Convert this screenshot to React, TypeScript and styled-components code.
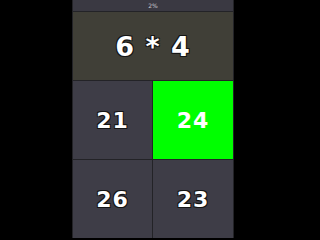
import React from 'react';
import styled, { createGlobalStyle } from 'styled-components';

const GlobalStyle = createGlobalStyle`
  html, body {
    margin: 0;
    padding: 0;
    background: #000;
    height: 100%;
    overflow: hidden;
  }
`;

const Frame = styled.div`
  margin-left: 72px;
  width: 162px;
  height: 238px;
  box-sizing: border-box;
  padding: 0 1px;
  background: #232327;
  display: flex;
  flex-direction: column;
  gap: 1px;
  font-family: "DejaVu Sans", sans-serif;
`;

const Progress = styled.div`
  height: 11px;
  flex: none;
  background: #3a3942;
  color: #c9c9cf;
  font-size: 6px;
  line-height: 11px;
  text-align: center;
`;

const Question = styled.div`
  height: 68px;
  flex: none;
  background: #403f37;
  color: #fff;
  font-size: 27px;
  font-weight: bold;
  letter-spacing: 1px;
  display: flex;
  align-items: center;
  justify-content: center;
  text-shadow: 1px 1px 0 #151515, -1px -1px 0 #151515, 1px -1px 0 #151515, -1px 1px 0 #151515;
`;

const Answers = styled.div`
  flex: 1;
  display: grid;
  grid-template-columns: 79px 80px;
  grid-auto-rows: 78px;
  gap: 1px;
`;

const Answer = styled.div<{ $correct?: boolean }>`
  background: ${p => (p.$correct ? '#00ff00' : '#3e3d47')};
  color: #fff;
  font-size: 22px;
  font-weight: bold;
  letter-spacing: 1px;
  display: flex;
  align-items: center;
  justify-content: center;
  text-shadow: ${p =>
    p.$correct
      ? 'none'
      : '1px 1px 0 #151515, -1px -1px 0 #151515, 1px -1px 0 #151515, -1px 1px 0 #151515'};
`;

const answers = [
  { value: 21, correct: false },
  { value: 24, correct: true },
  { value: 26, correct: false },
  { value: 23, correct: false },
];

export default function App() {
  return (
    <>
      <GlobalStyle />
      <Frame>
        <Progress>2%</Progress>
        <Question>6 * 4</Question>
        <Answers>
          {answers.map(a => (
            <Answer key={a.value} $correct={a.correct}>
              {a.value}
            </Answer>
          ))}
        </Answers>
      </Frame>
    </>
  );
}
